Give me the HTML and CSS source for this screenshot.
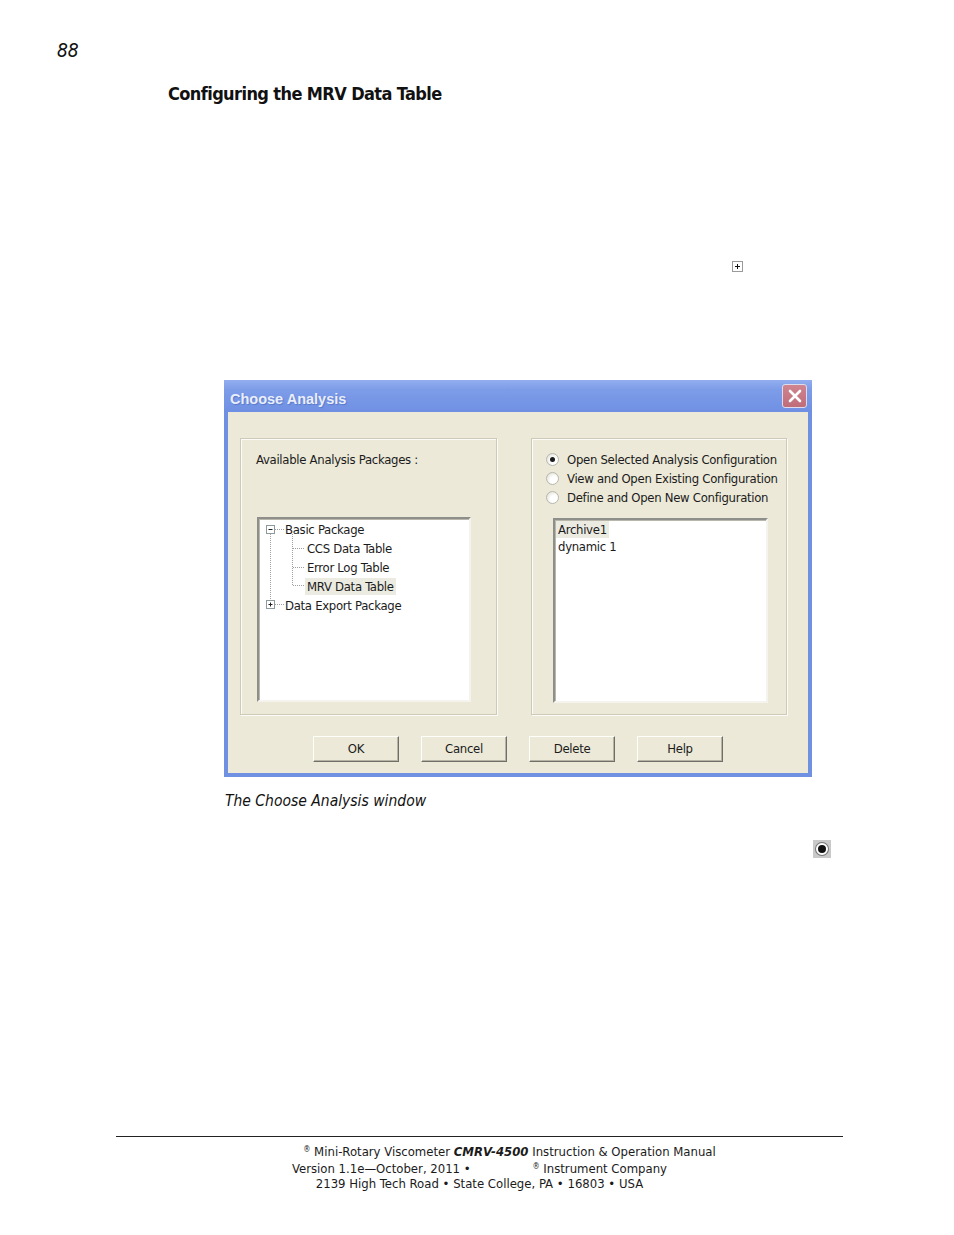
FILE: index.html
```html
<!DOCTYPE html>
<html lang="en">
<head>
  <meta charset="UTF-8">
  <meta name="viewport" content="width=device-width, initial-scale=1.0">
  <title>Configuring the MRV Data Table</title>
  <link rel="stylesheet" href="styles.css">
</head>
<body>

  <div class="page">
    <div class="folio">88</div>

    <h1 class="heading">Configuring the MRV Data Table</h1>

    <!-- icone de expandir no texto -->
    <div class="para para-expand">
      <span class="icon-plus"></span>
    </div>

    <!-- Janela Choose Analysis -->
    <figure class="figure">
      <div class="dialog">
        <div class="titlebar">
          <span class="titlebar-text">Choose Analysis</span>
          <span class="close-btn">
            <svg width="14" height="14" viewBox="0 0 14 14">
              <path d="M2 2 L12 12 M12 2 L2 12" stroke="#fff" stroke-width="2.6" stroke-linecap="round"/>
            </svg>
          </span>
        </div>

        <div class="dialog-body">
          <div class="groups">
            <div class="group group-left">
              <div class="group-label">Available Analysis Packages :</div>
              <div class="sunken tree">
                <svg class="tree-lines" width="60" height="100" viewBox="0 0 60 100">
                  <g stroke="#a0a0a0" stroke-width="1" stroke-dasharray="1 1" fill="none">
                    <path d="M11.5 15 V80"/>
                    <path d="M16 10.5 H25"/>
                    <path d="M16 85.5 H25"/>
                    <path d="M33.5 15 V67"/>
                    <path d="M34 29.5 H46"/>
                    <path d="M34 48.5 H46"/>
                    <path d="M34 66.5 H46"/>
                  </g>
                  <rect x="7.5" y="6.5" width="8" height="8" fill="#fff" stroke="#8c9a9c"/>
                  <path d="M9.5 10.5 H13.5" stroke="#222"/>
                  <rect x="7.5" y="81.5" width="8" height="8" fill="#fff" stroke="#8c9a9c"/>
                  <path d="M9.5 85.5 H13.5 M11.5 83.5 V87.5" stroke="#222"/>
                </svg>
                <div class="tree-row lvl0">Basic Package</div>
                <div class="tree-row lvl1">CCS Data Table</div>
                <div class="tree-row lvl1">Error Log Table</div>
                <div class="tree-row lvl1"><span class="selected">MRV Data Table</span></div>
                <div class="tree-row lvl0">Data Export Package</div>
              </div>
            </div>

            <div class="group group-right">
              <div class="radios">
                <div class="radio-row"><span class="radio checked"></span>Open Selected Analysis Configuration</div>
                <div class="radio-row"><span class="radio"></span>View and Open Existing Configuration</div>
                <div class="radio-row"><span class="radio"></span>Define and Open New Configuration</div>
              </div>
              <div class="sunken listbox">
                <div class="list-row"><span class="selected">Archive1</span></div>
                <div class="list-row">dynamic 1</div>
              </div>
            </div>
          </div>

          <div class="buttons">
            <div class="btn">OK</div>
            <div class="btn">Cancel</div>
            <div class="btn">Delete</div>
            <div class="btn">Help</div>
          </div>
        </div>
      </div>
      <figcaption class="caption">The Choose Analysis window</figcaption>
    </figure>

    <!-- icone de radio no texto -->
    <div class="para para-radio">
      <span class="icon-radio"><span class="icon-radio-dot"></span></span>
    </div>

    <footer class="footer">
      <div class="footer-line"><span class="blank blank-1"></span><sup>®</sup> Mini-Rotary Viscometer <b><i>CMRV-4500</i></b> Instruction &amp; Operation Manual</div>
      <div class="footer-line">Version 1.1e—October, 2011 • <span class="blank blank-2"></span><sup>®</sup> Instrument Company</div>
      <div class="footer-line">2139 High Tech Road • State College, PA • 16803 • USA</div>
    </footer>
  </div>

</body>
</html>
```

FILE: styles.css
```css
body {
  margin: 0;
  padding: 0;
  background-color: #fff;
  color: #111;
  font-family: "DejaVu Sans Condensed", "DejaVu Sans", sans-serif;
  font-stretch: condensed;
}

.page {
  width: 954px;
  height: 1235px;
  overflow: hidden;
}

.folio {
  margin-top: 40px;
  padding-left: 57px;
  height: 20px;
  line-height: 20px;
  font-size: 19px;
  font-style: italic;
}

.heading {
  margin: 22px 0 0 0;
  padding-left: 168px;
  height: 24px;
  line-height: 24px;
  font-size: 18px;
  letter-spacing: -0.6px;
  font-weight: bold;
}

.para-expand {
  margin-top: 155px;
  padding-left: 732px;
  height: 11px;
}

.icon-plus {
  display: block;
  width: 9px;
  height: 9px;
  border: 1px solid #9a9a9a;
  position: relative;
  background: #fff;
}

.icon-plus::before,
.icon-plus::after {
  content: "";
  position: absolute;
  background: #111;
}

.icon-plus::before {
  left: 2px;
  top: 4px;
  width: 5px;
  height: 1px;
}

.icon-plus::after {
  left: 4px;
  top: 2px;
  width: 1px;
  height: 5px;
}

.figure {
  margin: 108px 0 0 0;
  padding-left: 224px;
}

.dialog {
  width: 588px;
  height: 397px;
  box-sizing: border-box;
  background-color: #ece9d8;
  border: 4px solid #7090e2;
  border-top: 0;
  display: flex;
  flex-direction: column;
  font-size: 13px;
  letter-spacing: -0.3px;
  color: #1b1b1b;
}

.titlebar {
  height: 32px;
  margin: 0 -4px;
  background: linear-gradient(#93aeef, #7d9ce8 30%, #7394e5 80%, #6f8fe2);
  display: flex;
  align-items: center;
  justify-content: space-between;
  padding: 0 5px 0 6px;
  letter-spacing: 0;
}

.titlebar-text {
  font-family: "Liberation Sans", Arial, sans-serif;
  font-weight: bold;
  font-size: 14.5px;
  color: #e9eefb;
  text-shadow: 1px 1px 1px #5b78c8;
  margin-top: 5px;
}

.close-btn {
  width: 23px;
  height: 22px;
  border: 1px solid #dcdcec;
  border-radius: 3px;
  background: linear-gradient(#cf8590, #c06c79);
  display: flex;
  align-items: center;
  justify-content: center;
}

.dialog-body {
  flex: 1;
  display: flex;
  flex-direction: column;
}

.groups {
  display: flex;
  gap: 34px;
  padding: 26px 0 0 12px;
}

.group {
  height: 277px;
  box-sizing: border-box;
  border: 1px solid #cdcab8;
  box-shadow: inset 1px 1px #fbfbf7, 1px 1px #fbfbf7;
}

.group-left {
  width: 257px;
  padding: 12px 0 0 15px;
}

.group-right {
  width: 256px;
  padding: 11px 0 0 14px;
}

.group-label {
  height: 18px;
  line-height: 18px;
}

.sunken {
  position: relative;
  box-sizing: border-box;
  height: 185px;
  background: #fff;
  border: 2px solid;
  border-color: #8e8e8a #f4f3ee #f4f3ee #8e8e8a;
  box-shadow: inset 1px 1px #b9b7ab;
}

.tree {
  width: 214px;
  margin-top: 48px;
  margin-left: 1px;
  padding-top: 1px;
}

.tree-lines {
  position: absolute;
  left: 0;
  top: 0;
}

.tree-row {
  height: 19px;
  line-height: 19px;
}

.lvl0 {
  padding-left: 26px;
}

.lvl1 {
  padding-left: 48px;
}

.selected {
  background-color: #ecebe2;
  padding: 1px 2px;
  margin-left: -2px;
}

.radios {
  display: flex;
  flex-direction: column;
}

.radio-row {
  height: 19px;
  display: flex;
  align-items: center;
  gap: 8px;
  white-space: nowrap;
}

.radio {
  flex-shrink: 0;
  width: 11px;
  height: 11px;
  border-radius: 50%;
  border: 1px solid #b8b7ae;
  background: radial-gradient(circle at 65% 65%, #fff 35%, #e5e4dc 80%);
  box-sizing: content-box;
  position: relative;
  margin-top: -1px;
}

.radio.checked::after {
  content: "";
  position: absolute;
  left: 3px;
  top: 3px;
  width: 5px;
  height: 5px;
  border-radius: 50%;
  background: #1c1c1c;
}

.listbox {
  width: 215px;
  margin-top: 11px;
  margin-left: 7px;
  padding: 1px 0 0 3px;
}

.list-row {
  height: 17px;
  line-height: 17px;
}

.buttons {
  display: flex;
  justify-content: center;
  gap: 22px;
  margin-top: 21px;
}

.btn {
  width: 86px;
  height: 26px;
  box-sizing: border-box;
  border: 1px solid;
  border-color: #fefefb #6f6e68 #6f6e68 #fefefb;
  box-shadow: inset -1px -1px #b6b3a4;
  background: #ece9d8;
  text-align: center;
  line-height: 24px;
}

.caption {
  margin-top: 15px;
  padding-left: 1px;
  height: 18px;
  line-height: 18px;
  font-size: 15.5px;
  font-style: italic;
}

.para-radio {
  margin-top: 30px;
  padding-left: 813px;
  height: 18px;
}

.icon-radio {
  width: 18px;
  height: 18px;
  background: #c9c9c9;
  display: flex;
  align-items: center;
  justify-content: center;
}

.icon-radio-dot {
  width: 8px;
  height: 8px;
  border-radius: 50%;
  background: #111;
  border: 2px solid #fff;
  box-shadow: 0 0 0 1px #777;
}

.footer {
  margin: 278px 0 0 116px;
  width: 727px;
  border-top: 1px solid #222;
  padding-top: 4px;
  font-size: 13px;
  color: #1b1b1b;
}

.footer-line {
  text-align: center;
  height: 17px;
  line-height: 17px;
}

.footer-line sup {
  font-size: 8px;
  vertical-align: 4px;
}

.blank {
  display: inline-block;
  height: 1px;
}

.blank-1 {
  width: 60px;
}

.blank-2 {
  width: 58px;
}
```
